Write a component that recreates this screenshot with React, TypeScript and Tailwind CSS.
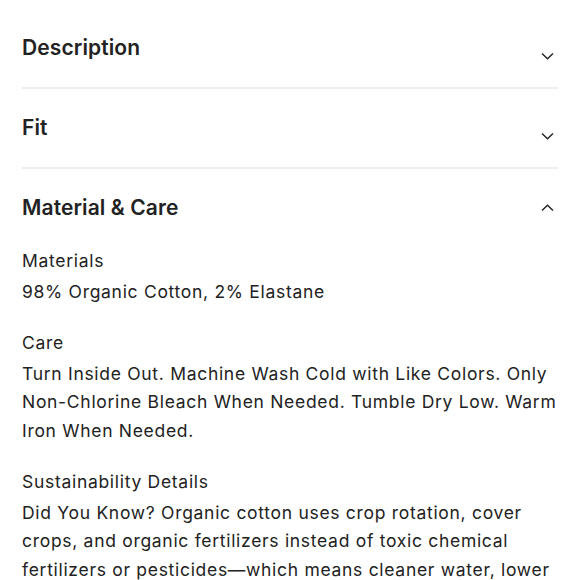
import React from "react";

function Chevron({ up }: { up?: boolean }) {
  return (
    <svg width="13" height="8" viewBox="0 0 13 8" fill="none" className="block">
      {up ? (
        <path d="M1 6.5 L6.5 1.2 L12 6.5" stroke="#222" strokeWidth="1.4" />
      ) : (
        <path d="M1 1.5 L6.5 6.8 L12 1.5" stroke="#222" strokeWidth="1.4" />
      )}
    </svg>
  );
}

function Header({ title, open }: { title: string; open?: boolean }) {
  return (
    <div className="flex h-[78px] items-center justify-between">
      <h2 className="text-[21px] font-semibold tracking-[0.1px] text-[#222]">{title}</h2>
      <div className={open ? "mr-[4px]" : "mr-[4px] mt-[16px]"}>
        <Chevron up={open} />
      </div>
    </div>
  );
}

export default function App() {
  return (
    <div
      className="min-h-[580px] bg-white px-[22px] pt-[9px] text-[#222]"
      style={{ fontFamily: "Inter, 'Liberation Sans', sans-serif" }}
    >
      <div className="border-b-2 border-[#eeeeee]">
        <Header title="Description" />
      </div>
      <div className="border-b-2 border-[#eeeeee]">
        <Header title="Fit" />
      </div>
      <div>
        <Header title="Material & Care" open />
        <div className="flex flex-col gap-[23px] text-[17.5px] leading-[28.5px] tracking-[0.7px]">
          <div>
            <p>Materials</p>
            <p className="mt-[2px]">98% Organic Cotton, 2% Elastane</p>
          </div>
          <div>
            <p>Care</p>
            <p className="mt-[2px]">
              Turn Inside Out. Machine Wash Cold with Like Colors. Only Non-Chlorine Bleach When Needed. Tumble Dry Low. Warm Iron When Needed.
            </p>
          </div>
          <div>
            <p>Sustainability Details</p>
            <p className="mt-[2px]">
              Did You Know? Organic cotton uses crop rotation, cover crops, and organic fertilizers instead of toxic chemical fertilizers or pesticides—which means cleaner water, lower energy use, and healthier soil.
            </p>
          </div>
        </div>
      </div>
    </div>
  );
}
